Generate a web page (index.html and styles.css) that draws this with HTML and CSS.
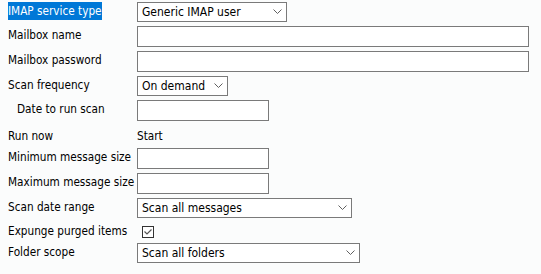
FILE: index.html
```html
<!DOCTYPE html>
<html lang="en">
<head>
<meta charset="UTF-8">
<meta name="viewport" content="width=device-width, initial-scale=1.0">
<title>IMAP scan settings</title>
<link rel="stylesheet" href="styles.css">
</head>
<body>
<form class="settings">
  <div class="label"><span class="selected">IMAP service type</span></div>
  <div class="value">
    <select class="sel sel-service">
      <option>Generic IMAP user</option>
    </select>
  </div>

  <div class="label">Mailbox name</div>
  <div class="value"><input type="text" class="field field-wide"></div>

  <div class="label">Mailbox password</div>
  <div class="value"><input type="password" class="field field-wide"></div>

  <div class="label">Scan frequency</div>
  <div class="value">
    <select class="sel sel-freq">
      <option>On demand</option>
    </select>
  </div>

  <div class="label indent">Date to run scan</div>
  <div class="value"><input type="text" class="field field-short"></div>

  <div class="label text-row">Run now</div>
  <div class="value text-row">Start</div>

  <div class="label">Minimum message size</div>
  <div class="value"><input type="text" class="field field-short"></div>

  <div class="label">Maximum message size</div>
  <div class="value"><input type="text" class="field field-short"></div>

  <div class="label">Scan date range</div>
  <div class="value">
    <select class="sel sel-range">
      <option>Scan all messages</option>
    </select>
  </div>

  <div class="label check-row">Expunge purged items</div>
  <div class="value check-row"><input type="checkbox" class="check" checked></div>

  <div class="label">Folder scope</div>
  <div class="value">
    <select class="sel sel-scope">
      <option>Scan all folders</option>
    </select>
  </div>
</form>
</body>
</html>
```

FILE: styles.css
```css
body {
  margin: 0;
  padding: 2px 8px;
  background-color: #fbfcfc;
  font-family: "DejaVu Sans Condensed", "DejaVu Sans", Verdana, sans-serif;
  font-stretch: condensed;
  font-size: 11.7px;
  line-height: 16px;
  color: #000;
}
.settings {
  display: grid;
  grid-template-columns: 129px 1fr;
  row-gap: 4px;
  align-items: start;
}
.label {
  padding-top: 1px;
  white-space: nowrap;
}
.label.indent {
  padding-left: 9px;
}
.selected {
  background-color: #0078d7;
  color: #fff;
  padding: 2px 0;
}
.text-row {
  padding-top: 3px;
}
.check-row {
  padding-top: 1px;
}
.field {
  display: block;
  box-sizing: border-box;
  height: 21px;
  margin: 0;
  padding: 0 4px;
  border: 1px solid #7a7a7a;
  background-color: #fff;
  font: inherit;
}
.field-wide {
  width: 392px;
}
.field-short {
  width: 132px;
}
.sel {
  display: block;
  box-sizing: border-box;
  height: 20px;
  margin: 0;
  padding: 0 20px 0 4px;
  border: 1px solid #7a7a7a;
  border-radius: 0;
  background-color: #fff;
  background-image: url("data:image/svg+xml,%3Csvg xmlns='http://www.w3.org/2000/svg' width='9' height='6'%3E%3Cpath d='M0.5 0.5 L4.5 4.5 L8.5 0.5' fill='none' stroke='%23606060' stroke-width='1'/%3E%3C/svg%3E");
  background-repeat: no-repeat;
  background-position: right 4px center;
  font: inherit;
  font-size: 12px;
  color: #000;
  appearance: none;
  -webkit-appearance: none;
}
.sel-service {
  width: 150px;
}
.sel-freq {
  width: 91px;
  padding-right: 16px;
}
.sel-range {
  width: 215px;
}
.sel-scope {
  width: 223px;
}
.check {
  display: block;
  box-sizing: border-box;
  width: 12px;
  height: 12px;
  margin: 3px 0 1px 5px;
  border: 1px solid #333;
  background-color: #fff;
  background-image: url("data:image/svg+xml,%3Csvg xmlns='http://www.w3.org/2000/svg' width='10' height='10'%3E%3Cpath d='M1.5 4.5 L4 7 L8.5 2.5' fill='none' stroke='%23555' stroke-width='1.2'/%3E%3C/svg%3E");
  background-repeat: no-repeat;
  background-position: center;
  appearance: none;
  -webkit-appearance: none;
}
```
